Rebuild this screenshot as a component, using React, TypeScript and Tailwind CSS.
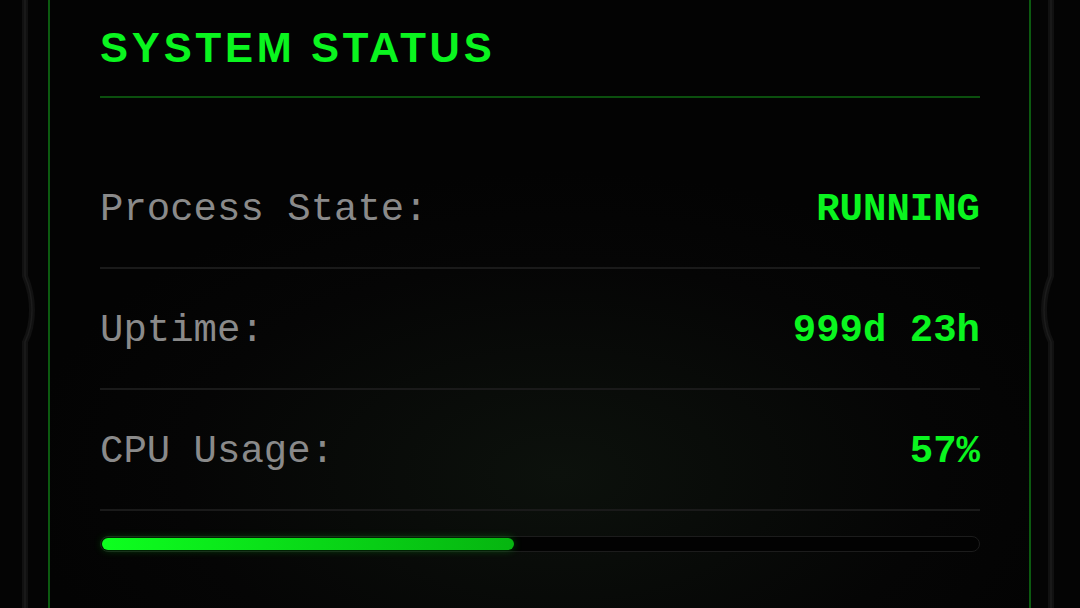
import type React from "react"

const rows = [
  { label: "Process State:", value: "RUNNING" },
  { label: "Uptime:", value: "999d 23h" },
  { label: "CPU Usage:", value: "57%" },
]

const SideEdge: React.FC<{ side: "left" | "right" }> = ({ side }) => {
  // faint device frame edge with the side button bump
  const d =
    side === "left"
      ? "M25 0 L25 276 C30 288 32 300 32 310 C32 322 30 332 25 342 L25 608"
      : "M20 0 L20 276 C15 288 13 300 13 310 C13 322 15 332 20 342 L20 608"
  return (
    <svg width="100%" height="608" viewBox={side === "left" ? "0 0 48 608" : "0 0 49 608"} className="block">
      <path d={d} fill="none" stroke="#111111" strokeWidth="6" />
      <path d={d} fill="none" stroke="#1c1c1c" strokeWidth="1.5" />
    </svg>
  )
}

export default function App() {
  return (
    <div className="flex h-[608px] w-[1080px] overflow-hidden bg-[#040404]">
      <div className="w-[48px] shrink-0">
        <SideEdge side="left" />
      </div>

      <div className="flex w-[983px] shrink-0 flex-col border-x-2 border-[#0c5a10] bg-[radial-gradient(ellipse_55%_50%_at_52%_78%,#0c110c_0%,#050505_70%,#030303_100%)] pl-[50px] pr-[49px] pt-[27px]">
        {/* Header */}
        <div className="border-b-2 border-[#0b4f0e] pb-[27px]">
          <h1 className="text-[42px] font-bold uppercase leading-none tracking-[3.8px] text-[#0af51f] [font-family:'Liberation_Sans',Arial,sans-serif]">
            System Status
          </h1>
        </div>

        {/* Stats */}
        <div className="mt-[50px] flex flex-col">
          {rows.map((row) => (
            <div
              key={row.label}
              className="flex h-[121px] items-center justify-between border-b-2 border-[#1a1a1a] pt-[5px] text-[39px] leading-none [font-family:'Liberation_Mono','DejaVu_Sans_Mono',monospace]"
            >
              <span className="text-[#8a8a8a]">{row.label}</span>
              <span className="font-bold text-[#0af51f]">{row.value}</span>
            </div>
          ))}
        </div>

        {/* CPU bar */}
        <div className="mt-[25px] h-[16px] w-full rounded-full border border-[#1c1c1c] bg-[#020202] p-[1px]">
          <div className="h-full w-[47%] rounded-full bg-gradient-to-r from-[#0dff1f] to-[#06b510] shadow-[0_0_8px_rgba(10,245,31,0.3)]" />
        </div>
      </div>

      <div className="w-[49px] shrink-0">
        <SideEdge side="right" />
      </div>
    </div>
  )
}
